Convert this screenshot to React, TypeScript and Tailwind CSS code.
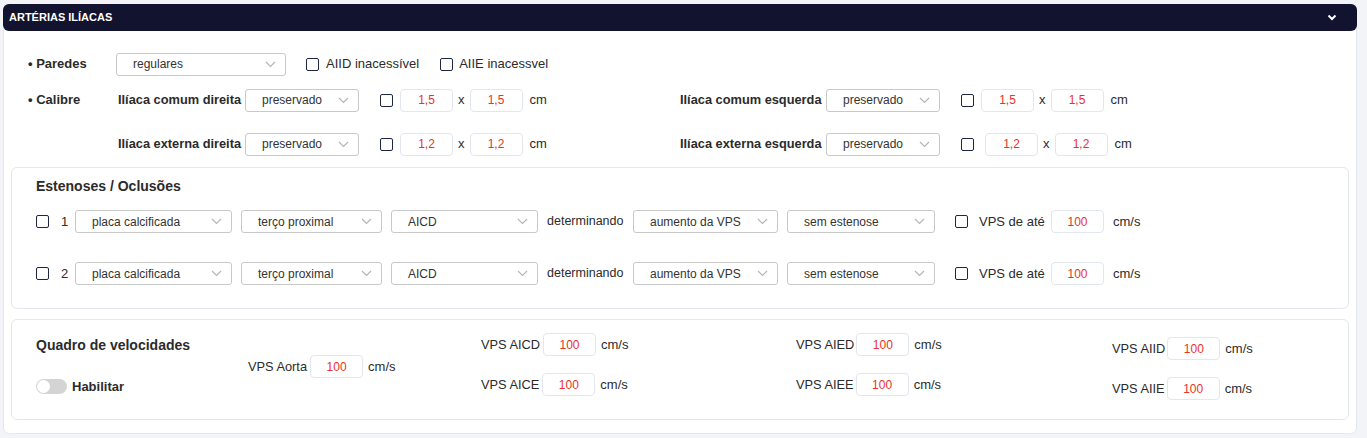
import React from "react";

const font = { fontFamily: '"Liberation Sans", Arial, sans-serif' };

function Chevron() {
  return (
    <svg width="11" height="7" viewBox="0 0 11 7" fill="none">
      <path d="M1 1l4.5 4.5L10 1" stroke="#b5b5b5" strokeWidth="1.2" />
    </svg>
  );
}

function Select({ value, w }: { value: string; w: string }) {
  return (
    <div className={`${w} h-[23px] flex items-center justify-between pl-4 pr-[9px] border border-[#c9c9c9] rounded-[3px] bg-white text-[12px] text-[#333]`}>
      <span>{value}</span>
      <Chevron />
    </div>
  );
}

function Check({ className = "" }: { className?: string }) {
  return <div className={`w-[13px] h-[13px] border border-[#1d2744] rounded-[2px] bg-white shrink-0 ${className}`} />;
}

function Num({ v, className = "" }: { v: string; className?: string }) {
  return (
    <div className={`w-[53px] h-[23px] flex items-center justify-center border border-[#e2e6ee] rounded-[4px] bg-white text-[12px] text-[#e8332a] shrink-0 ${className}`}>
      {v}
    </div>
  );
}

function CalibreSide({ label, lw, v, inputGap }: { label: string; lw: string; v: string; inputGap: string }) {
  return (
    <div className="flex items-center">
      <span className={`font-bold text-[12.8px] whitespace-nowrap shrink-0 ${lw}`}>{label}</span>
      <div className="ml-[4px]">
        <Select value="preservado" w="w-[114px]" />
      </div>
      <Check className="ml-[21px]" />
      <Num v={v} className={inputGap} />
      <span className="ml-[5px] text-[13px]">x</span>
      <Num v={v} className="ml-[5px]" />
      <span className="ml-[7px] text-[13px]">cm</span>
    </div>
  );
}

function EstRow({ n }: { n: string }) {
  return (
    <div className="flex items-center h-[23px]">
      <Check />
      <span className="ml-[12px] text-[13px] w-[7px]">{n}</span>
      <div className="ml-[7px]"><Select value="placa calcificada" w="w-[157px]" /></div>
      <div className="ml-[9px]"><Select value="terço proximal" w="w-[141px]" /></div>
      <div className="ml-[9px]"><Select value="AICD" w="w-[147px]" /></div>
      <span className="ml-[9px] w-[78px] text-[12.5px] whitespace-nowrap">determinando</span>
      <div className="ml-[8px]"><Select value="aumento da VPS" w="w-[145px]" /></div>
      <div className="ml-[9px]"><Select value="sem estenose" w="w-[148px]" /></div>
      <Check className="ml-[20px]" />
      <span className="ml-[11px] w-[64px] text-[13px] whitespace-nowrap">VPS de até</span>
      <Num v="100" className="ml-[8px]" />
      <span className="ml-[9px] text-[13px]">cm/s</span>
    </div>
  );
}

function Vps({ label, gap, className = "" }: { label: string; gap: string; className?: string }) {
  return (
    <div className={`flex items-center h-[23px] ${className}`}>
      <span className="text-[12.8px] whitespace-nowrap">{label}</span>
      <Num v="100" className={gap} />
      <span className="ml-[5px] text-[13px]">cm/s</span>
    </div>
  );
}

export default function App() {
  return (
    <div style={font} className="w-[1367px] h-[438px] bg-[#f3f4f7] pt-[4px] pl-[3px] text-[#2b2b2b]">
      <div className="w-[1354px] h-[430px] bg-white border border-[#e3e6ec] rounded-md">
        <div className="-m-px h-[27px] bg-[#11132f] rounded-md flex items-center justify-between pl-[6px] pr-[20px]">
          <span className="text-white font-bold text-[11px]">ARTÉRIAS ILÍACAS</span>
          <svg width="10" height="7" viewBox="0 0 10 7" fill="none">
            <path d="M1.5 1.5L5 5l3.5-3.5" stroke="white" strokeWidth="2" />
          </svg>
        </div>

        <div className="pt-[23px]">
          <div className="flex items-center h-[22px] pl-[24px]">
            <span className="w-[88px] font-bold text-[13px]">• Paredes</span>
            <Select value="regulares" w="w-[170px]" />
            <Check className="ml-[20px]" />
            <span className="ml-[7px] text-[13px]">AIID inacessível</span>
            <Check className="ml-[21px]" />
            <span className="ml-[6px] text-[13px]">AIIE inacessvel</span>
          </div>

          <div className="flex items-center h-[22px] pl-[24px] mt-[14px]">
            <span className="w-[90px] font-bold text-[13px]">• Calibre</span>
            <div className="w-[562px]">
              <CalibreSide label="Ilíaca comum direita" lw="w-[123px]" v="1,5" inputGap="ml-[7px]" />
            </div>
            <CalibreSide label="Ilíaca comum esquerda" lw="w-[142px]" v="1,5" inputGap="ml-[7px]" />
          </div>

          <div className="flex items-center h-[22px] pl-[24px] mt-[22px]">
            <span className="w-[90px]" />
            <div className="w-[562px]">
              <CalibreSide label="Ilíaca externa direita" lw="w-[123px]" v="1,2" inputGap="ml-[7px]" />
            </div>
            <CalibreSide label="Ilíaca externa esquerda" lw="w-[142px]" v="1,2" inputGap="ml-[11px]" />
          </div>

          <div className="mx-[7px] mt-[12px] border border-[#e3e6ec] rounded-md pl-6 pt-[8px] pb-[23px]">
            <div className="font-bold text-[14px] leading-5">Estenoses / Oclusões</div>
            <div className="mt-[14px] flex flex-col gap-[29px]">
              <EstRow n="1" />
              <EstRow n="2" />
            </div>
          </div>

          <div className="mx-[7px] mt-[10px] border border-[#e3e6ec] rounded-md pl-6 pb-[19px] flex items-start">
            <div className="w-[212px] pt-[15px]">
              <div className="font-bold text-[14px] leading-5">Quadro de velocidades</div>
              <div className="mt-[22px] flex items-center">
                <div className="w-[31px] h-[15px] rounded-full bg-[#d4d4d4] p-[1px]">
                  <div className="w-[13px] h-[13px] rounded-full bg-white" />
                </div>
                <span className="ml-[5px] font-bold text-[13px]">Habilitar</span>
              </div>
            </div>
            <div className="w-[233px] pt-[35px]">
              <Vps label="VPS Aorta" gap="ml-[3px]" />
            </div>
            <div className="w-[315px] pt-[13px]">
              <Vps label="VPS AICD" gap="ml-[3px]" />
              <Vps label="VPS AICE" gap="ml-[3px]" className="mt-[17px]" />
            </div>
            <div className="w-[316px] pt-[13px]">
              <Vps label="VPS AIED" gap="ml-[2px]" />
              <Vps label="VPS AIEE" gap="ml-[2px]" className="mt-[17px]" />
            </div>
            <div className="pt-[17px]">
              <Vps label="VPS AIID" gap="ml-[2px]" />
              <Vps label="VPS AIIE" gap="ml-[2px]" className="mt-[17px]" />
            </div>
          </div>
        </div>
      </div>
    </div>
  );
}
